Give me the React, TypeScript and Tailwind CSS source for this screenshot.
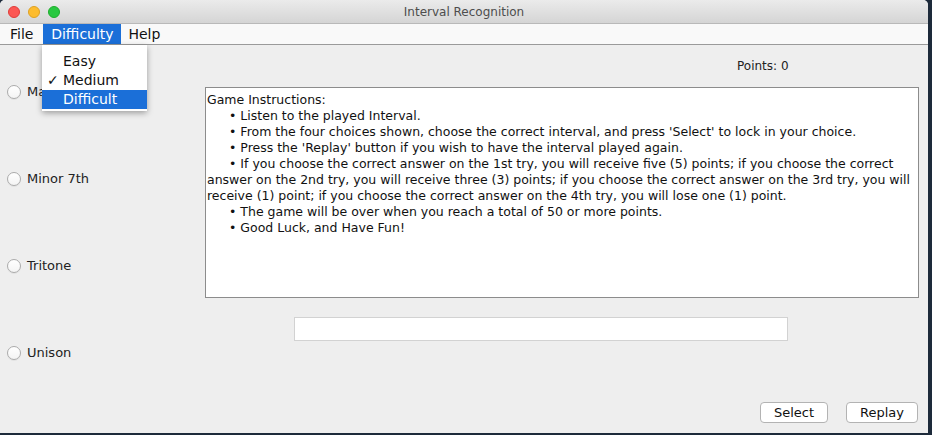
import React from "react";

const font = { fontFamily: '"DejaVu Sans", "Noto Sans", sans-serif' };

function Radio({ label }: { label: string }) {
  return (
    <div className="flex items-center h-[16px]">
      <div className="w-[14px] h-[14px] rounded-full border border-[#ababab] bg-gradient-to-b from-white to-[#f4f4f4] shadow-[0_1px_0_rgba(0,0,0,0.05)]" />
      <span className="ml-[6px] text-[13px] text-[#222]">{label}</span>
    </div>
  );
}

const lines: { indent: boolean; text: string }[] = [
  { indent: false, text: "Game Instructions:" },
  { indent: true, text: "• Listen to the played Interval." },
  { indent: true, text: "• From the four choices shown, choose the correct interval, and press 'Select' to lock in your choice." },
  { indent: true, text: "• Press the 'Replay' button if you wish to have the interval played again." },
  { indent: true, text: "• If you choose the correct answer on the 1st try, you will receive five (5) points; if you choose the correct" },
  { indent: false, text: "answer on the 2nd try, you will receive three (3) points; if you choose the correct answer on the 3rd try, you will" },
  { indent: false, text: "receive (1) point; if you choose the correct answer on the 4th try, you will lose one (1) point." },
  { indent: true, text: "• The game will be over when you reach a total of 50 or more points." },
  { indent: true, text: "• Good Luck, and Have Fun!" },
];

export default function App() {
  return (
    <div className="w-[932px] h-[435px] bg-[#1d2a3a] overflow-hidden" style={font}>
      <div className="relative w-[928px] h-[433px] bg-[#eeeeee] rounded-t-[5px] overflow-hidden flex flex-col">
        {/* title bar */}
        <div className="relative h-[24px] bg-gradient-to-b from-[#ebebeb] to-[#d5d5d5] border-b border-[#b9b9b9] flex items-center justify-center">
          <div className="absolute left-[8px] top-[6px] flex gap-[8px]">
            <div className="w-[12px] h-[12px] rounded-full bg-[#fc5753] border border-[#df3d39]" />
            <div className="w-[12px] h-[12px] rounded-full bg-[#fdbc2e] border border-[#dea123]" />
            <div className="w-[12px] h-[12px] rounded-full bg-[#28c840] border border-[#1dad2b]" />
          </div>
          <span className="text-[12px] text-[#4d4d4d]">Interval Recognition</span>
        </div>
        {/* menu bar */}
        <div className="h-[21px] bg-[#f9f9f9] border-b border-[#9a9a9a] flex items-stretch text-[14px] text-[#111]">
          <div className="px-[10px] flex items-center">File</div>
          <div className="w-[78px] flex items-center justify-center bg-[#1b6fd8] text-white">Difficulty</div>
          <div className="px-[7px] flex items-center">Help</div>
        </div>
        {/* content */}
        <div className="flex-1 flex">
          <div className="w-[205px] flex flex-col pl-[7px] pt-[39px] gap-[71px]">
            <Radio label="Major 2nd" />
            <Radio label="Minor 7th" />
            <Radio label="Tritone" />
            <Radio label="Unison" />
          </div>
          <div className="flex-1 flex flex-col pr-[9px]">
            <div className="h-[42px] flex items-start pt-[12px] pl-[532px] text-[12px] text-[#222]">Points: 0</div>
            <div className="h-[211px] bg-white border border-[#8c8c8c] pt-[4px] pl-[1px] text-[12.5px] leading-[16px] text-[#111]">
              {lines.map((l, i) => (
                <div key={i} className={"whitespace-pre " + (l.indent ? "pl-[22px]" : "")}>{l.text}</div>
              ))}
            </div>
            <div className="mt-[19px] ml-[89px] w-[494px] h-[24px] bg-white border border-[#d2d2d2]" />
            <div className="mt-[61px] flex justify-end gap-[18px] pr-[1px]">
              <div className="w-[68px] h-[21px] rounded-[4px] bg-white border border-[#b3b3b3] flex items-center justify-center text-[13px] text-[#111]">Select</div>
              <div className="w-[72px] h-[21px] rounded-[4px] bg-white border border-[#b3b3b3] flex items-center justify-center text-[13px] text-[#111]">Replay</div>
            </div>
          </div>
        </div>
        {/* dropdown */}
        <div className="absolute left-[42px] top-[45px] w-[105px] h-[66px] bg-white shadow-[0_2px_6px_rgba(0,0,0,0.35)] pt-[7px] text-[14px] text-[#111]">
          <div className="h-[19px] flex items-center pl-[21px]">Easy</div>
          <div className="h-[19px] flex items-center relative pl-[21px]">
            <span className="absolute left-[5px]">✓</span>Medium
          </div>
          <div className="h-[19px] flex items-center pl-[21px] bg-[#1b6fd8] text-white">Difficult</div>
        </div>
      </div>
    </div>
  );
}
